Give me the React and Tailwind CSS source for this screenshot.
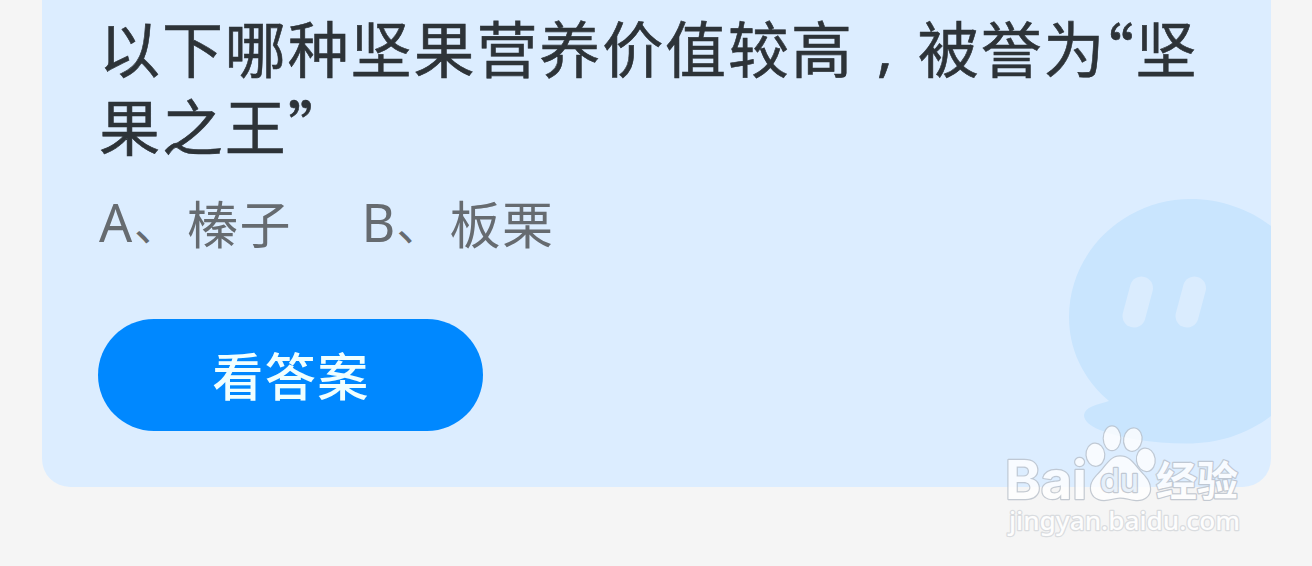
const options = [
  { key: 'A', label: '榛子' },
  { key: 'B', label: '板栗' },
];

const toes = [
  { cx: 1095.4, cy: 454.7, rx: 8.8, ry: 11, rotate: -4 },
  { cx: 1112, cy: 438.3, rx: 8.2, ry: 11.8, rotate: 0 },
  { cx: 1132.8, cy: 439.6, rx: 8.6, ry: 11.2, rotate: 10 },
  { cx: 1145.8, cy: 459.8, rx: 8.8, ry: 11.2, rotate: -8 },
];

const Mascot = () => (
  <svg className="absolute right-0 bottom-0 h-[307px] w-[231px]" viewBox="1040 180 231 307">
    <path
      fill="#c9e5fe"
      d="M1191 199 C1220 199 1249 209 1271 226 L1271 416 C1246 435 1217 443.500 1187 443.500 C1150 443.500 1121 438 1100 430 C1090 426 1084 421 1084 415 C1085 407 1096 405 1109 401 C1090 385 1069 357 1069 317 C1069 252 1124 199 1191 199 Z"
    />
    <g stroke="#daecfe" strokeWidth="23" strokeLinecap="round">
      <path d="M1141.500 288 L1134 316" />
      <path d="M1194.500 288 L1187 316" />
    </g>
  </svg>
);

const Watermark = () => (
  <svg
    className="pointer-events-none absolute right-[52px] bottom-[16px] h-[140px] w-[270px] opacity-80"
    viewBox="990 410 270 140"
    fill="#ffffff"
    stroke="#b9c0ca"
    strokeWidth="2.4"
    paintOrder="stroke"
    strokeLinejoin="round"
  >
    {toes.map((toe) => (
      <ellipse
        key={toe.cx}
        cx={toe.cx}
        cy={toe.cy}
        rx={toe.rx}
        ry={toe.ry}
        transform={`rotate(${toe.rotate} ${toe.cx} ${toe.cy})`}
      />
    ))}
    <path d="M1120 456.500 C1129 456.500 1133 463 1138 469 C1143 475 1150 480 1150 489 C1150 496 1144 500.500 1136 500 C1130 499.500 1125 497.500 1120 497.500 C1115 497.500 1110 500 1104 500 C1096 500 1091 495 1091 488 C1091 480 1098 475 1103 469 C1108 463 1112 456.500 1120 456.500 Z" />
    <text
      className="font-['Inter',sans-serif] font-bold"
      x="1005"
      y="499"
      fontSize="53"
      textLength="82"
      lengthAdjust="spacingAndGlyphs"
    >
      Bai
    </text>
    <text
      className="font-['Inter',sans-serif] font-medium"
      x="1100"
      y="492"
      fontSize="32"
      textLength="39"
      lengthAdjust="spacingAndGlyphs"
      fill="#e6f0fa"
    >
      du
    </text>
    <text
      className="font-['Noto_Sans_CJK_SC',sans-serif] font-bold"
      x="1156"
      y="496"
      fontSize="41"
      textLength="82"
      lengthAdjust="spacingAndGlyphs"
    >
      经验
    </text>
    <text
      className="font-['Noto_Sans',sans-serif] font-medium"
      x="1009"
      y="529.500"
      fontSize="25.5"
      textLength="231"
      lengthAdjust="spacingAndGlyphs"
      stroke="#d3d6da"
    >
      jingyan.baidu.com
    </text>
  </svg>
);

const App = () => {
  return (
    <div className="relative h-[566px] w-full overflow-hidden bg-[#f5f5f5] pr-[41px] pl-[42px] font-['Noto_Sans_CJK_SC',sans-serif]">
      <main className="relative flex h-[487px] flex-col items-start overflow-hidden rounded-b-[28px] bg-[#dcedff] pt-[8px] pl-[57px]">
        <Mascot />

        <h1 className="relative text-[61px] leading-[78px] font-normal tracking-[1.9px] whitespace-nowrap text-[#2d3338] [-webkit-text-stroke:0.6px_#2d3338]">
          <div className="flex h-[78px]">
            <span>以下哪种坚果营养价值较高</span>
            <span className="w-[64px] text-center font-['Noto_Sans',sans-serif]">,</span>
            <span>被誉为</span>
            <span className="-ml-[3px] w-[32px] pt-[2px] tracking-normal [font-feature-settings:'halt']">“</span>
            <span>坚</span>
          </div>
          <div className="flex h-[78px]">
            <span>果之王</span>
            <span className="pt-px tracking-normal [font-feature-settings:'halt']">”</span>
          </div>
        </h1>

        <div className="relative mt-[23px] flex text-[51px] leading-[70px] tracking-[1.5px] text-[#666b70]">
          {options.map((option) => (
            <div key={option.key} className="flex h-[70px] w-[262.5px]">
              <span className="w-[35px] font-['Noto_Sans',sans-serif] text-[52px] tracking-normal">{option.key}</span>
              <span className="w-[53px] text-[45px]">、</span>
              <span className="whitespace-nowrap">{option.label}</span>
            </div>
          ))}
        </div>

        <button className="relative mt-[62px] -ml-px flex h-[112px] w-[385px] items-center justify-center rounded-full bg-[#0088ff] pb-[2px] pl-px text-[51px] font-medium tracking-[1.5px] text-[#f0ffff]">
          看答案
        </button>
      </main>

      <Watermark />
    </div>
  );
};

export default App;
